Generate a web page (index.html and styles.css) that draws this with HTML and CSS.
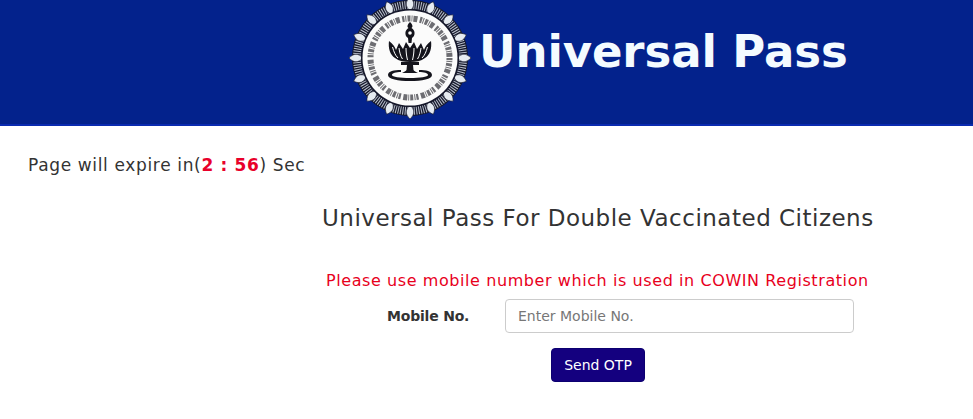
FILE: index.html
```html
<!DOCTYPE html>
<html lang="en">
<head>
<meta charset="utf-8">
<title>Universal Pass</title>
<link rel="stylesheet" href="styles.css">
</head>
<body>
<header class="banner">
  <svg class="emblem" viewBox="-61 -61 122 122" width="122" height="122" aria-hidden="true">
    <defs>
      <path id="leaf" d="M0 -61 C5 -56 5 -52 0 -47 C-5 -52 -5 -56 0 -61Z" fill="#e6ebf1" stroke="#171a2c" stroke-width=".6"/>
    </defs>
    <circle r="58" fill="#171a2c"/>
    <circle r="53" fill="none" stroke="#b9bfcd" stroke-width="8" stroke-dasharray="1 1.3"/>
    <use href="#leaf"/>
    <use href="#leaf" transform="rotate(22.5)"/>
    <use href="#leaf" transform="rotate(45)"/>
    <use href="#leaf" transform="rotate(67.5)"/>
    <use href="#leaf" transform="rotate(90)"/>
    <use href="#leaf" transform="rotate(112.5)"/>
    <use href="#leaf" transform="rotate(135)"/>
    <use href="#leaf" transform="rotate(157.5)"/>
    <use href="#leaf" transform="rotate(180)"/>
    <use href="#leaf" transform="rotate(202.5)"/>
    <use href="#leaf" transform="rotate(225)"/>
    <use href="#leaf" transform="rotate(247.5)"/>
    <use href="#leaf" transform="rotate(270)"/>
    <use href="#leaf" transform="rotate(292.5)"/>
    <use href="#leaf" transform="rotate(315)"/>
    <use href="#leaf" transform="rotate(337.5)"/>
    <circle r="49" fill="#15172a"/>
    <circle r="47.5" fill="#fbfbfb"/>
    <circle r="39.5" fill="none" stroke="#2a2a30" stroke-width="6" stroke-dasharray="2.2 .9 1 1.2 3 1.1 .9 1 4 2.5" opacity=".68"/>
    <g fill="#14141c">
      <path d="M0 -36 C3 -33 3 -31 1.5 -30 C5.5 -28 5.5 -22 2 -20 L1.5 -15 L-1.5 -15 L-2 -20 C-5.5 -22 -5.5 -28 -1.5 -30 C-3 -31 -3 -33 0 -36Z"/>
      <path d="M-21 -17 C-17 -14 -15 -11 -14 -8 L-11 -15 L-7 -9 L-4 -16 L0 -10 L4 -16 L7 -9 L11 -15 L14 -8 C15 -11 17 -14 21 -17 C22 -10 20 -3 15 0 C11 3 6 4 0 4 C-6 4 -11 3 -15 0 C-20 -3 -22 -10 -21 -17Z"/>
      <path d="M-9 4 H9 V7 H3 L3.5 12 C4 13 6 14 8 15 H-8 C-6 14 -4 13 -3.5 12 L-3 7 H-9Z"/>
      <path d="M-22 17 C-22 13 -16 12 -9 12 L-9 14 C-14 14 -18 15 -18 17 C-18 19 -10 20 0 20 C10 20 18 19 18 17 C18 15 14 14 9 14 L9 12 C16 12 22 13 22 17 C22 21 12 23 0 23 C-12 23 -22 21 -22 17Z"/>
    </g>
    <g fill="none" stroke="#fff" stroke-width="1">
      <path d="M-17.500 -11 C-16 -6 -15 -3 -12 0"/>
      <path d="M-11 -10 C-10.500 -6 -9.500 -2 -7.500 1"/>
      <path d="M-4 -10 C-4 -6 -3.500 -2 -2.500 2"/>
      <path d="M4 -10 C4 -6 3.500 -2 2.500 2"/>
      <path d="M11 -10 C10.500 -6 9.500 -2 7.500 1"/>
      <path d="M17.500 -11 C16 -6 15 -3 12 0"/>
    </g>
    <circle cy="-25" r="1.800" fill="#fff"/>
  </svg>
  <h1 class="brand">Universal Pass</h1>
</header>
<main class="page">
  <p class="timer">Page will expire in(<strong class="count">2 : 56</strong>) Sec</p>
  <section class="panel">
    <h2 class="title">Universal Pass For Double Vaccinated Citizens</h2>
    <p class="notice">Please use mobile number which is used in COWIN Registration</p>
    <form class="form">
      <div class="field">
        <label class="label" for="mobile">Mobile No.</label>
        <input class="input" id="mobile" type="text" placeholder="Enter Mobile No.">
      </div>
      <button class="send" type="button">Send OTP</button>
    </form>
  </section>
</main>
</body>
</html>
```
FILE: styles.css
```css
* { box-sizing: border-box; }
html, body { margin: 0; padding: 0; }
body {
  height: 419px;
  overflow: hidden;
  background: #fff;
  color: #333;
  font-family: "DejaVu Sans", Verdana, sans-serif;
}
.banner {
  height: 126px;
  background: #03228c;
  border-bottom: 2px solid #0a2bb0;
  display: flex;
  align-items: flex-start;
  padding-left: 349px;
  overflow: hidden;
}
.emblem { flex: none; margin-top: -3px; }
.brand {
  margin: 24px 0 0 8px;
  color: #f4fbff;
  font-size: 45px;
  letter-spacing: -.1px;
  line-height: 56px;
  font-weight: 700;
  white-space: nowrap;
}
.page { padding: 0 0 0 28px; }
.timer {
  margin: 28px 0 0;
  font-size: 17px;
  letter-spacing: .65px;
  line-height: 22px;
  color: #333;
}
.count { color: #e8002a; font-weight: 700; }
.panel {
  margin-left: 294px;
  width: 560px;
}
.title {
  margin: 27px 0 0;
  font-size: 23px;
  letter-spacing: .5px;
  line-height: 30px;
  font-weight: 400;
  color: #333;
  white-space: nowrap;
}
.notice {
  margin: 37px 0 0;
  padding-left: 4px;
  font-size: 16px;
  letter-spacing: .58px;
  line-height: 22px;
  color: #e8001c;
  white-space: nowrap;
}
.form { display: flex; flex-direction: column; }
.field {
  display: flex;
  align-items: center;
  margin-top: 7px;
}
.label {
  width: 183px;
  padding-left: 65px;
  font-size: 14px;
  letter-spacing: -.2px;
  font-weight: 700;
  color: #333;
}
.input {
  width: 349px;
  height: 34px;
  padding: 0 12px;
  border: 1px solid #ccc;
  border-radius: 4px;
  font: 14px "DejaVu Sans", Verdana, sans-serif;
  color: #555;
  background: #fff;
}
.input::placeholder { color: #777; opacity: 1; }
.send {
  align-self: flex-start;
  margin: 15px 0 0 229px;
  width: 94px;
  height: 34px;
  padding: 0;
  border: 1px solid #0c0070;
  border-radius: 4px;
  background: #14007f;
  color: #fff;
  font: 14px "DejaVu Sans", Verdana, sans-serif;
}
```
